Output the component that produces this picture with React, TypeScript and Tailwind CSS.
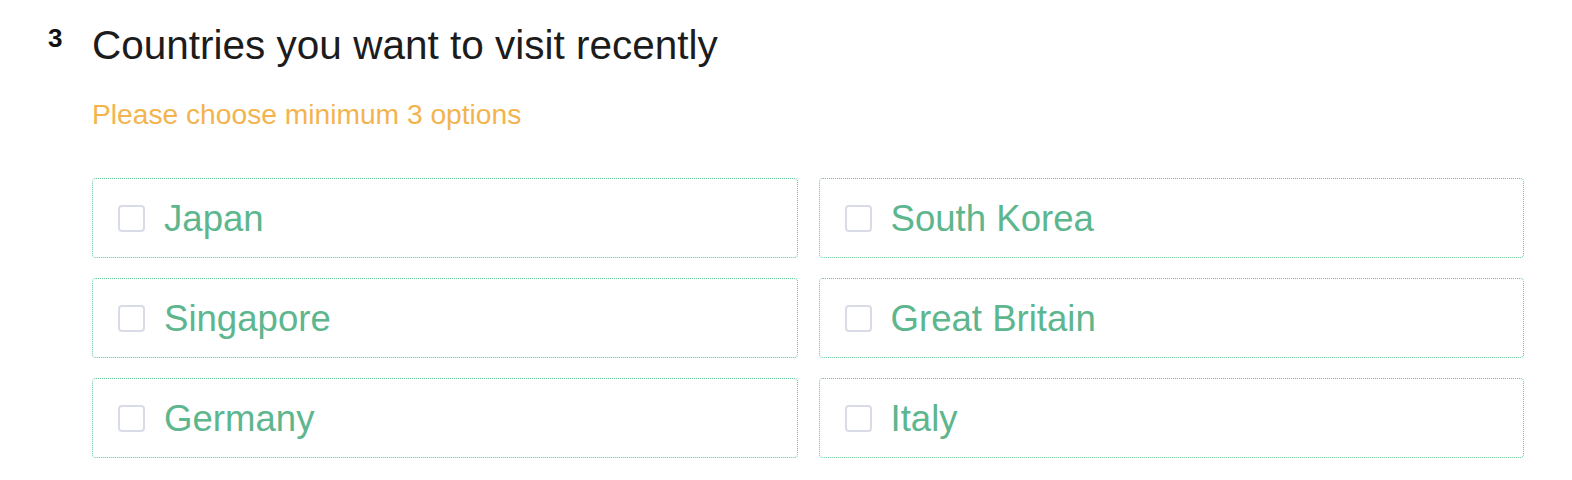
const OPTIONS = ["Japan", "South Korea", "Singapore", "Great Britain", "Germany", "Italy"];

export default function App() {
  return (
    <div className="min-h-screen bg-white pl-[48px] pr-[48px] pt-[21px] font-['Liberation_Sans',Arial,sans-serif]">
      <div className="flex">
        <div className="w-[44px] shrink-0 pt-[4px] text-[26px] font-bold leading-[26px] text-[#111]">3</div>
        <div className="flex-1">
          <h1 className="text-[40.5px] leading-[48px] text-[#1c1c1c]">Countries you want to visit recently</h1>
          <p className="mt-[29px] text-[28.2px] leading-[32px] text-[#f3b44e]">Please choose minimum 3 options</p>
          <div className="mt-[48px] grid grid-cols-2 gap-x-[21px] gap-y-[20px]">
            {OPTIONS.map((name) => (
              <Option key={name} label={name} />
            ))}
          </div>
        </div>
      </div>
    </div>
  );
}

function Option({ label }: { label: string }) {
  return (
    <label className="flex h-[80px] cursor-pointer items-center gap-[19px] rounded-[4px] border border-dotted border-[#5fc496] pl-[25px]">
      <span className="h-[27px] w-[27px] shrink-0 rounded-[4px] border-[2.5px] border-[#d9dce7] bg-white" />
      <span className="pt-[2px] text-[36.6px] leading-none text-[#5db68e]">{label}</span>
    </label>
  );
}
